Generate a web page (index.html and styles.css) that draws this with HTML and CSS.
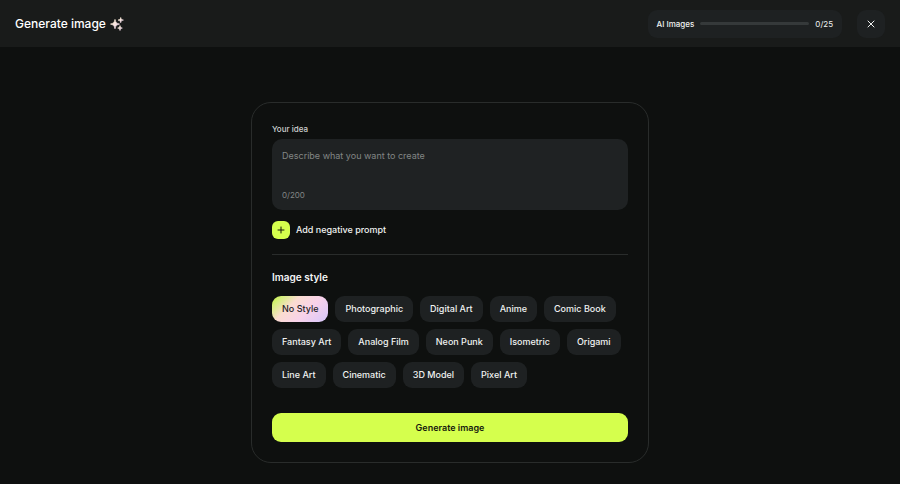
FILE: index.html
```html
<!DOCTYPE html>
<html lang="en">
<head>
<meta charset="utf-8">
<meta name="viewport" content="width=device-width, initial-scale=1">
<title>Generate image</title>
<link rel="stylesheet" href="styles.css">
</head>
<body>
<header class="topbar">
  <h1 class="title">Generate image
    <svg class="sparkles" viewBox="0 0 14 14" aria-hidden="true">
      <defs><linearGradient id="glow" x1="0" y1="0" x2="1" y2="1"><stop offset="0" stop-color="#fff3cf"/><stop offset="1" stop-color="#f3d8f4"/></linearGradient></defs>
      <g fill="url(#glow)" stroke="url(#glow)" stroke-width=".7" stroke-linejoin="round">
        <path d="M5 2.400C5.700 5.500 6.400 6.200 9.500 7.100C6.400 8 5.700 8.700 5 11.800C4.300 8.700 3.600 8 .5 7.100C3.600 6.200 4.300 5.500 5 2.400Z"/>
        <path d="M10.700 .5C11.100 2.300 11.500 2.700 13.400 3.100C11.500 3.500 11.100 3.900 10.700 5.700C10.300 3.900 9.900 3.500 8 3.100C9.900 2.700 10.300 2.300 10.700 .5Z"/>
        <path d="M10 8.600C10.300 10.300 10.700 10.700 12.300 11.100C10.700 11.500 10.300 11.900 10 13.500C9.700 11.900 9.300 11.500 7.700 11.100C9.300 10.700 9.700 10.300 10 8.600Z"/>
      </g>
    </svg>
  </h1>
  <div class="tools">
    <div class="quota">
      <label for="quota">AI Images</label>
      <progress id="quota" value="0" max="25"></progress>
      <span>0/25</span>
    </div>
    <button class="close" type="button" aria-label="Close">
      <svg viewBox="0 0 8 8" aria-hidden="true"><path d="M1 1 7 7M7 1 1 7"/></svg>
    </button>
  </div>
</header>
<main>
  <form class="card">
    <label class="field-label" for="idea">Your idea</label>
    <div class="prompt">
      <textarea id="idea" maxlength="200" placeholder="Describe what you want to create"></textarea>
      <span class="count">0/200</span>
    </div>
    <button class="negative" type="button">
      <span class="plus"><svg viewBox="0 0 8 8" aria-hidden="true"><path d="M4 1V7M1 4H7"/></svg></span>
      Add negative prompt
    </button>
    <section class="styles">
      <h2>Image style</h2>
      <div class="chips">
        <button class="chip selected" type="button">No Style</button>
        <button class="chip" type="button">Photographic</button>
        <button class="chip" type="button">Digital Art</button>
        <button class="chip" type="button">Anime</button>
        <button class="chip" type="button">Comic Book</button>
        <button class="chip" type="button">Fantasy Art</button>
        <button class="chip" type="button">Analog Film</button>
        <button class="chip" type="button">Neon Punk</button>
        <button class="chip" type="button">Isometric</button>
        <button class="chip" type="button">Origami</button>
        <button class="chip" type="button">Line Art</button>
        <button class="chip" type="button">Cinematic</button>
        <button class="chip" type="button">3D Model</button>
        <button class="chip" type="button">Pixel Art</button>
      </div>
    </section>
    <button class="generate" type="submit">Generate image</button>
  </form>
</main>
</body>
</html>
```
FILE: styles.css
```css
* { box-sizing: border-box; }

body {
  margin: 0;
  min-height: 100vh;
  background: #0e100f;
  color: #f0f2f1;
  font-family: Inter, "Liberation Sans", sans-serif;
  font-size: 9px;
  line-height: 12px;
}

button, textarea {
  margin: 0;
  border: 0;
  padding: 0;
  font: inherit;
  color: inherit;
}

button { cursor: pointer; }

.topbar {
  display: flex;
  align-items: center;
  justify-content: space-between;
  height: 47px;
  padding: 0 15px;
  background: #191b1a;
}

.title {
  display: flex;
  align-items: center;
  gap: 4px;
  margin: 0;
  font-size: 12px;
  line-height: 16px;
  font-weight: 500;
  color: #fff;
}

.sparkles { width: 14px; height: 14px; }

.tools { display: flex; gap: 15px; }

.quota {
  display: flex;
  align-items: center;
  gap: 6px;
  height: 28px;
  padding: 0 9px;
  border-radius: 9px;
  background: #1e2122;
  font-size: 8px;
}

.quota label { font-weight: 500; }

.quota progress {
  appearance: none;
  width: 109px;
  height: 3px;
  border: 0;
  border-radius: 2px;
  overflow: hidden;
  background: #35393a;
}

.quota progress::-webkit-progress-bar { background: #35393a; }
.quota progress::-webkit-progress-value { background: #d5ff4d; }

.close {
  display: grid;
  place-items: center;
  width: 28px;
  height: 28px;
  border-radius: 9px;
  background: #1e2122;
}

.close svg { width: 8px; height: 8px; }

.close path, .plus path {
  fill: none;
  stroke: currentColor;
  stroke-width: 1;
  stroke-linecap: round;
}

main {
  display: flex;
  justify-content: center;
  padding: 55px 16px 20px;
}

.card {
  display: flex;
  flex-direction: column;
  width: 100%;
  max-width: 398px;
  padding: 20px;
  border: 1px solid #292c2b;
  border-radius: 20px;
}

.field-label {
  margin-bottom: 4px;
  font-size: 8px;
  font-weight: 500;
  color: #cdd0cf;
}

.prompt {
  display: flex;
  flex-direction: column;
  padding: 11px 10px 9px;
  border-radius: 10px;
  background: #1f2223;
}

.prompt textarea {
  height: 36px;
  resize: none;
  outline: 0;
  background: none;
}

.prompt textarea::placeholder { color: #828685; opacity: 1; }

.count {
  margin-top: 3px;
  font-size: 8px;
  color: #828685;
}

.negative {
  display: flex;
  align-items: center;
  align-self: flex-start;
  gap: 6px;
  margin-top: 11px;
  background: none;
  font-weight: 500;
}

.plus {
  display: grid;
  place-items: center;
  width: 18px;
  height: 18px;
  border-radius: 6px;
  background: #d5ff4d;
  color: #161a0b;
}

.plus svg { width: 8px; height: 8px; }

.styles {
  margin-top: 15px;
  padding-top: 14px;
  border-top: 1px solid #292c2b;
}

.styles h2 {
  margin: 0 0 11px;
  font-size: 10px;
  line-height: 16px;
  font-weight: 600;
  color: #f4f5f5;
}

.chips {
  display: flex;
  flex-wrap: wrap;
  gap: 7px;
}

.chip {
  padding: 7px 10px;
  border-radius: 9px;
  background: #1e2122;
  font-weight: 500;
}

.selected {
  background: linear-gradient(135deg, #c4f53a 0%, #d6ee80 14%, #fbdcd0 34%, #f8d2ea 62%, #d5c6fb 100%);
  color: #241d26;
}

.generate {
  height: 29px;
  margin-top: 25px;
  border-radius: 9px;
  background: #d5ff4d;
  color: #171a0e;
  font-weight: 600;
}
```
